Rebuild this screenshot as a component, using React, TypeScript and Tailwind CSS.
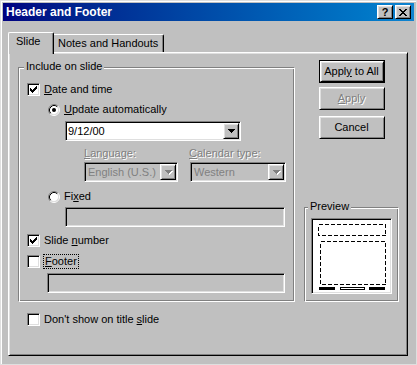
import React from "react";

const raised =
  "border border-t-white border-l-white border-r-black border-b-black shadow-[inset_1px_1px_#dfdfdf,inset_-1px_-1px_#808080] bg-[#c0c0c0]";
const sunken =
  "border border-t-[#808080] border-l-[#808080] border-r-white border-b-white shadow-[inset_1px_1px_#000,inset_-1px_-1px_#dfdfdf]";
const etched =
  "border border-t-[#808080] border-l-[#808080] border-r-white border-b-white shadow-[inset_1px_1px_#fff,inset_-1px_-1px_#808080]";
const emboss = "text-[#808080] [text-shadow:1px_1px_0_#fff]";

function U({ children }: { children: React.ReactNode }) {
  return <span className="underline">{children}</span>;
}

function Checkbox({ checked }: { checked?: boolean }) {
  return (
    <span className={`w-[13px] h-[13px] bg-white flex items-center justify-center shrink-0 ${sunken}`}>
      {checked && (
        <svg width="7" height="7" viewBox="0 0 7 7" shapeRendering="crispEdges">
          <path
            d="M6 0h1v1h-1z M5 1h2v1h-2z M0 2h1v1h-1z M4 2h3v1h-3z M0 3h2v1h-2z M3 3h3v1h-3z M0 4h5v1h-5z M1 5h3v1h-3z M2 6h1v1h-1z"
            fill="#000"
          />
        </svg>
      )}
    </span>
  );
}

function Radio({ checked }: { checked?: boolean }) {
  return (
    <svg width="12" height="12" viewBox="0 0 12 12" className="shrink-0">
      <circle cx="6" cy="6" r="4.5" fill="#fff" />
      <path d="M2.11 9.89 A5.5 5.5 0 0 1 9.89 2.11" fill="none" stroke="#808080" strokeWidth="1" />
      <path d="M9.89 2.11 A5.5 5.5 0 0 1 2.11 9.89" fill="none" stroke="#fff" strokeWidth="1" />
      <path d="M2.82 9.18 A4.5 4.5 0 0 1 9.18 2.82" fill="none" stroke="#000" strokeWidth="1" />
      <path d="M9.18 2.82 A4.5 4.5 0 0 1 2.82 9.18" fill="none" stroke="#dfdfdf" strokeWidth="1" />
      {checked && <circle cx="6" cy="6" r="2" fill="#000" />}
    </svg>
  );
}

function Arrow({ disabled }: { disabled?: boolean }) {
  const d = "M0 0h7v1h-7z M1 1h5v1h-5z M2 2h3v1h-3z M3 3h1v1h-1z";
  return (
    <svg width="8" height="5" viewBox="0 0 8 5" shapeRendering="crispEdges">
      {disabled ? (
        <>
          <path d={d} fill="#fff" transform="translate(1 1)" />
          <path d={d} fill="#808080" />
        </>
      ) : (
        <path d={d} fill="#000" />
      )}
    </svg>
  );
}

function DropButton({ disabled }: { disabled?: boolean }) {
  return (
    <div className={`w-[16px] h-full flex items-center justify-center shrink-0 ${raised}`}>
      <span className="pl-px">
        <Arrow disabled={disabled} />
      </span>
    </div>
  );
}

function Btn({
  children,
  def,
  disabled,
}: {
  children: React.ReactNode;
  def?: boolean;
  disabled?: boolean;
}) {
  const inner = (
    <div className={`w-full h-full flex items-center justify-center ${raised} ${disabled ? emboss : ""}`}>
      {children}
    </div>
  );
  return def ? (
    <div className="w-[66px] h-[23px] border border-black">{inner}</div>
  ) : (
    <div className="w-[66px] h-[23px]">{inner}</div>
  );
}

function PreviewArt() {
  return (
    <svg width="77" height="72" viewBox="0 0 77 72" shapeRendering="crispEdges">
      <rect x="4.5" y="3.5" width="67" height="11" fill="none" stroke="#000" strokeDasharray="4 2" />
      <rect x="6.5" y="20.5" width="65" height="43" fill="none" stroke="#000" strokeDasharray="4 2" />
      <rect x="5" y="66" width="16" height="3" fill="#000" />
      <rect x="26.5" y="66.5" width="24" height="2" fill="none" stroke="#000" />
      <rect x="55" y="66" width="16" height="3" fill="#000" />
    </svg>
  );
}

export default function App() {
  return (
    <div className="w-[417px] h-[365px] bg-[#c0c0c0] font-['Liberation_Sans',Arial,sans-serif] text-[11px] leading-[13px] text-black border border-[#dfdfdf] shadow-[inset_1px_1px_#fff] p-[2px] flex flex-col overflow-hidden select-none">
      {/* Title bar */}
      <div className="h-[18px] shrink-0 flex items-center bg-linear-to-r from-[#000080] to-[#1084d0] pl-[3px] pr-[3px]">
        <span className="flex-1 text-white font-bold text-[12px] leading-[14px]">Header and Footer</span>
        <div className="flex gap-[2px]">
          <div className={`w-[16px] h-[14px] flex items-center justify-center font-bold text-[11px] leading-none ${raised}`}>
            ?
          </div>
          <div className={`w-[16px] h-[14px] flex items-center justify-center ${raised}`}>
            <svg width="8" height="7" viewBox="0 0 8 7" shapeRendering="crispEdges">
              <path
                d="M0 0h2v1H0z M6 0h2v1H6z M1 1h2v1H1z M5 1h2v1H5z M2 2h4v1H2z M3 3h2v1H3z M2 4h4v1H2z M1 5h2v1H1z M5 5h2v1H5z M0 6h2v1H0z M6 6h2v1H6z"
                fill="#000"
              />
            </svg>
          </div>
        </div>
      </div>

      {/* Body */}
      <div className="flex-1 flex flex-col pt-[11px] pl-[5px] pr-[6px] pb-[6px]">
        {/* Tabs */}
        <div className="flex items-end h-[20px] shrink-0 relative z-10">
          <div className="w-[46px] h-[22px] -mb-[2px] bg-[#c0c0c0] border-t border-l border-r border-t-white border-l-white border-r-black shadow-[inset_-1px_0_#808080] rounded-t-[2px] pl-[7px] pt-[2px]">
            Slide
          </div>
          <div className="w-[110px] h-[18px] bg-[#c0c0c0] border-t border-r border-t-white border-r-black shadow-[inset_-1px_0_#808080] rounded-tr-[2px] pl-[4px] pt-[2px]">
            Notes and Handouts
          </div>
        </div>

        {/* Panel */}
        <div className={`flex-1 flex items-start pl-[9px] pt-[7px] ${raised}`}>
          {/* Left column */}
          <div className="w-[277px] mt-[7px] flex flex-col">
            <div className={`relative flex flex-col pl-[8px] pt-[15px] pb-[8px] ${etched}`}>
              <span className="absolute left-[5px] -top-[8px] px-[2px] bg-[#c0c0c0]">Include on slide</span>

              <div className="flex items-center h-[13px] gap-[4px]">
                <Checkbox checked />
                <span>
                  <U>D</U>ate and time
                </span>
              </div>

              <div className="flex items-center h-[13px] gap-[4px] mt-[7px] ml-[21px]">
                <Radio checked />
                <span>
                  <U>U</U>pdate automatically
                </span>
              </div>

              <div className={`w-[176px] h-[20px] mt-[5px] ml-[38px] flex bg-white p-px ${sunken}`}>
                <span className="flex-1 pl-px self-center">9/12/00</span>
                <DropButton />
              </div>

              <div className={`flex h-[13px] mt-[6px] ml-[57px] ${emboss}`}>
                <span className="w-[105px]">
                  <U>L</U>anguage:
                </span>
                <span>
                  <U>C</U>alendar type:
                </span>
              </div>

              <div className="flex mt-[2px] ml-[57px] gap-[12px]">
                <div className={`w-[94px] h-[20px] flex bg-[#c0c0c0] p-px ${sunken}`}>
                  <span className="flex-1 pl-[2px] self-center text-[#808080]">English (U.S.)</span>
                  <DropButton disabled />
                </div>
                <div className={`w-[96px] h-[20px] flex bg-[#c0c0c0] p-px ${sunken}`}>
                  <span className="flex-1 pl-[2px] self-center text-[#808080]">Western</span>
                  <DropButton disabled />
                </div>
              </div>

              <div className="flex items-center h-[13px] gap-[4px] mt-[8px] ml-[21px]">
                <Radio />
                <span>
                  Fi<U>x</U>ed
                </span>
              </div>

              <div className={`w-[220px] h-[20px] mt-[4px] ml-[38px] bg-[#c0c0c0] ${sunken}`} />

              <div className="flex items-center h-[13px] gap-[4px] mt-[7px]">
                <Checkbox checked />
                <span>
                  Slide <U>n</U>umber
                </span>
              </div>

              <div className="flex items-center h-[13px] gap-[3px] mt-[8px]">
                <Checkbox />
                <span className="border border-dotted border-black px-px leading-[13px]">
                  <U>F</U>ooter
                </span>
              </div>

              <div className={`w-[238px] h-[20px] mt-[5px] ml-[20px] bg-[#c0c0c0] ${sunken}`} />
            </div>

            <div className="flex items-center h-[13px] gap-[4px] mt-[11px] ml-[9px]">
              <Checkbox />
              <span>
                Don't show on title <U>s</U>lide
              </span>
            </div>
          </div>

          {/* Right column */}
          <div className="w-[95px] ml-[9px] flex flex-col items-center">
            <Btn def>
              <span>
                Appl<U>y</U> to All
              </span>
            </Btn>
            <div className="mt-[4px]">
              <Btn disabled>
                <span>
                  <U>A</U>pply
                </span>
              </Btn>
            </div>
            <div className="mt-[6px]">
              <Btn>Cancel</Btn>
            </div>

            <div className={`relative self-stretch mt-[68px] h-[95px] pl-[6px] pt-[10px] ${etched}`}>
              <span className="absolute left-[3px] -top-[8px] px-[2px] bg-[#c0c0c0]">Preview</span>
              <div className={`w-[81px] h-[76px] bg-white p-[2px] ${sunken}`}>
                <PreviewArt />
              </div>
            </div>
          </div>
        </div>
      </div>
    </div>
  );
}
